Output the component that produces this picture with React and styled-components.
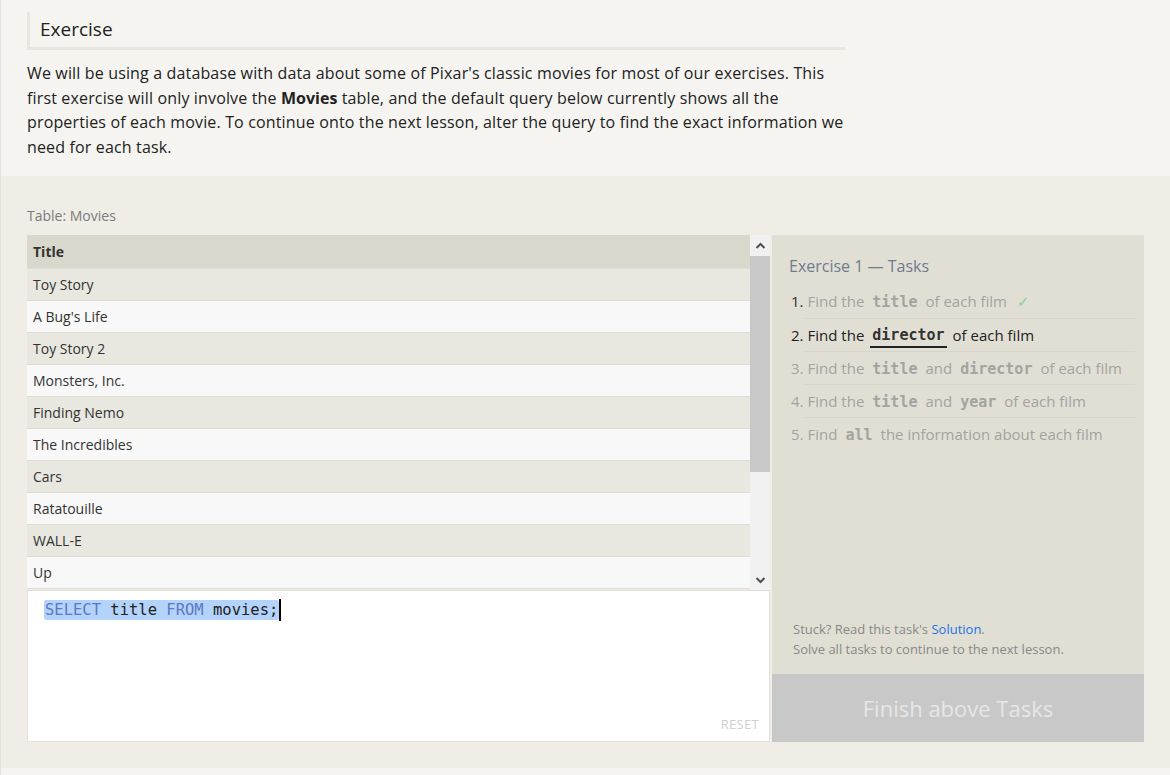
import React from "react";
import styled, { createGlobalStyle } from "styled-components";

const GlobalStyle = createGlobalStyle`
  html, body {
    margin: 0;
    padding: 0;
    background: #efede6;
  }
  body {
    font-family: "Open Sans", "Noto Sans", sans-serif;
    color: #222;
  }
`;

const Page = styled.div`
  width: 1170px;
  height: 775px;
  overflow: hidden;
  border-left: 1px solid #e4e2da;
  box-sizing: border-box;
`;

const Intro = styled.section`
  background: #f5f4f0;
  padding: 12px 0 16px 26px;
  height: 176px;
  box-sizing: border-box;
`;

const Heading = styled.h2`
  margin: 0;
  width: 818px;
  font-weight: normal;
  font-size: 19px;
  line-height: 35px;
  padding: 0 0 0 10px;
  border-left: 3px solid #e8e6de;
  border-bottom: 3px solid #e8e6de;
  box-sizing: border-box;
`;

const Paragraph = styled.p`
  margin: 11px 0 0 0;
  width: 820px;
  font-size: 16px;
  letter-spacing: 0.15px;
  line-height: 24.5px;
  color: #222;

  b {
    font-weight: bold;
    letter-spacing: 0;
  }
`;

const Workspace = styled.section`
  padding: 31px 26px 0 26px;
  height: 592px;
  box-sizing: border-box;
`;

const Caption = styled.div`
  font-size: 14px;
  color: #7b7b7b;
  margin-bottom: 10px;
  line-height: 18px;
`;

const Split = styled.div`
  display: flex;
  height: 507px;
`;

const LeftCol = styled.div`
  width: 743px;
  display: flex;
  flex-direction: column;
`;

const TableBox = styled.div`
  display: flex;
  height: 355px;
`;

const Rows = styled.div`
  flex: 1;
  display: flex;
  flex-direction: column;
`;

const Row = styled.div`
  height: ${(p) => (p.$head ? "34px" : "32px")};
  line-height: ${(p) => (p.$head ? "34px" : "32px")};
  padding-left: 6px;
  font-size: 14px;
  color: #333;
  background: ${(p) => (p.$head ? "#d9d8cc" : p.$odd ? "#e9e8e0" : "#f8f8f8")};
  font-weight: ${(p) => (p.$head ? "bold" : "normal")};
  border-bottom: 1px solid #dedcd3;
  box-sizing: border-box;
  flex-shrink: 0;
`;

const Scrollbar = styled.div`
  width: 20px;
  background: #f1f1f1;
  display: flex;
  flex-direction: column;
  align-items: center;
`;

const Arrow = styled.div`
  height: 21px;
  display: flex;
  align-items: center;
  justify-content: center;
  color: #505050;
`;

const Track = styled.div`
  flex: 1;
  width: 100%;
  display: flex;
  flex-direction: column;
`;

const Thumb = styled.div`
  height: 216px;
  background: #c8c8c8;
`;

const Editor = styled.div`
  flex: 1;
  background: #fff;
  border: 1px solid #e4e2da;
  border-top: 1px solid #e0ded6;
  display: flex;
  flex-direction: column;
  justify-content: space-between;
  padding: 8px 10px 8px 16px;
`;

const Code = styled.div`
  font-family: "DejaVu Sans Mono", "Liberation Mono", monospace;
  font-size: 15.5px;
  line-height: 20px;
  display: flex;
  align-items: center;
`;

const Selected = styled.span`
  background: #b3d3fb;
  border-radius: 2px;
  padding: 0 1px;
`;

const Keyword = styled.span`
  color: #5c79c4;
`;

const Cursor = styled.span`
  display: inline-block;
  width: 2px;
  height: 22px;
  background: #000;
`;

const Reset = styled.div`
  align-self: flex-end;
  font-size: 13px;
  color: #cfcfcf;
  letter-spacing: 0.3px;
`;

const RightCol = styled.div`
  width: 372px;
  margin-left: 2px;
  background: #e1dfd4;
  display: flex;
  flex-direction: column;
`;

const TaskArea = styled.div`
  flex: 1;
  padding: 20px 9px 0 17px;
`;

const TaskTitle = styled.div`
  font-size: 16px;
  color: #6f7b8f;
  line-height: 22px;
  margin-bottom: 8px;
`;

const TaskList = styled.ol`
  list-style: none;
  margin: 0;
  padding: 0;
`;

const Task = styled.li`
  height: 33px;
  line-height: 31px;
  font-size: 15px;
  color: ${(p) => (p.$active ? "#222" : "#a4a3a0")};
  border-top: ${(p) => (p.$first ? "none" : "1px solid #d8d6cb")};
  margin-left: 15px;
  box-sizing: border-box;
  display: flex;
  align-items: center;
  white-space: nowrap;
`;

const Num = styled.span`
  margin-left: -13px;
  color: ${(p) => (p.$done ? "#333" : "inherit")};
  margin-right: 4px;
`;

const Col = styled.code`
  font-family: "DejaVu Sans Mono", "Liberation Mono", monospace;
  font-weight: bold;
  font-size: 15px;
  margin: 1px 6px 0;
  padding: 0 2px;
  color: ${(p) => (p.$active ? "#333" : "#a4a3a0")};
  border-bottom: ${(p) => (p.$active ? "2px solid #222" : "none")};
  line-height: 22px;
`;

const Check = styled.span`
  color: #8fce9a;
  margin-left: 10px;
`;

const Help = styled.div`
  padding: 0 0 15px 21px;
  font-size: 13px;
  color: #888;
  line-height: 20px;
`;

const Link = styled.a`
  color: #1f73e6;
  text-decoration: none;
`;

const FinishButton = styled.div`
  height: 68px;
  background: #c8c8c8;
  color: #e6e6e6;
  font-size: 22px;
  display: flex;
  align-items: center;
  justify-content: center;
`;

const BottomStrip = styled.div`
  height: 7px;
  background: #f5f4f0;
`;

const movies = [
  "Toy Story",
  "A Bug's Life",
  "Toy Story 2",
  "Monsters, Inc.",
  "Finding Nemo",
  "The Incredibles",
  "Cars",
  "Ratatouille",
  "WALL-E",
  "Up",
];

function Chevron({ up }) {
  return (
    <svg width="11" height="8" viewBox="0 0 11 8">
      <path
        d={up ? "M1.5 6 L5.5 2 L9.5 6" : "M1.5 2 L5.5 6 L9.5 2"}
        fill="none"
        stroke="#505050"
        strokeWidth="2"
      />
    </svg>
  );
}

export default function App() {
  return (
    <Page>
      <GlobalStyle />
      <Intro>
        <Heading>Exercise</Heading>
        <Paragraph>
          We will be using a database with data about some of Pixar's classic movies for most of our
          exercises. This first exercise will only involve the <b>Movies</b> table, and the default
          query below currently shows all the properties of each movie. To continue onto the next
          lesson, alter the query to find the exact information we need for each task.
        </Paragraph>
      </Intro>
      <Workspace>
        <Caption>Table: Movies</Caption>
        <Split>
          <LeftCol>
            <TableBox>
              <Rows>
                <Row $head>Title</Row>
                {movies.map((m, i) => (
                  <Row key={m} $odd={i % 2 === 0}>
                    {m}
                  </Row>
                ))}
              </Rows>
              <Scrollbar>
                <Arrow>
                  <Chevron up />
                </Arrow>
                <Track>
                  <Thumb />
                </Track>
                <Arrow>
                  <Chevron />
                </Arrow>
              </Scrollbar>
            </TableBox>
            <Editor>
              <Code>
                <Selected>
                  <Keyword>SELECT</Keyword> title <Keyword>FROM</Keyword> movies;
                </Selected>
                <Cursor />
              </Code>
              <Reset>RESET</Reset>
            </Editor>
          </LeftCol>
          <RightCol>
            <TaskArea>
              <TaskTitle>Exercise 1 — Tasks</TaskTitle>
              <TaskList>
                <Task $first>
                  <Num $done>1.</Num>Find the<Col>title</Col>of each film<Check>✓</Check>
                </Task>
                <Task $active>
                  <Num>2.</Num>Find the<Col $active>director</Col>of each film
                </Task>
                <Task>
                  <Num>3.</Num>Find the<Col>title</Col>and<Col>director</Col>of each film
                </Task>
                <Task>
                  <Num>4.</Num>Find the<Col>title</Col>and<Col>year</Col>of each film
                </Task>
                <Task>
                  <Num>5.</Num>Find<Col>all</Col>the information about each film
                </Task>
              </TaskList>
            </TaskArea>
            <Help>
              Stuck? Read this task's <Link href="#">Solution</Link>.
              <br />
              Solve all tasks to continue to the next lesson.
            </Help>
            <FinishButton>Finish above Tasks</FinishButton>
          </RightCol>
        </Split>
      </Workspace>
      <BottomStrip />
    </Page>
  );
}
